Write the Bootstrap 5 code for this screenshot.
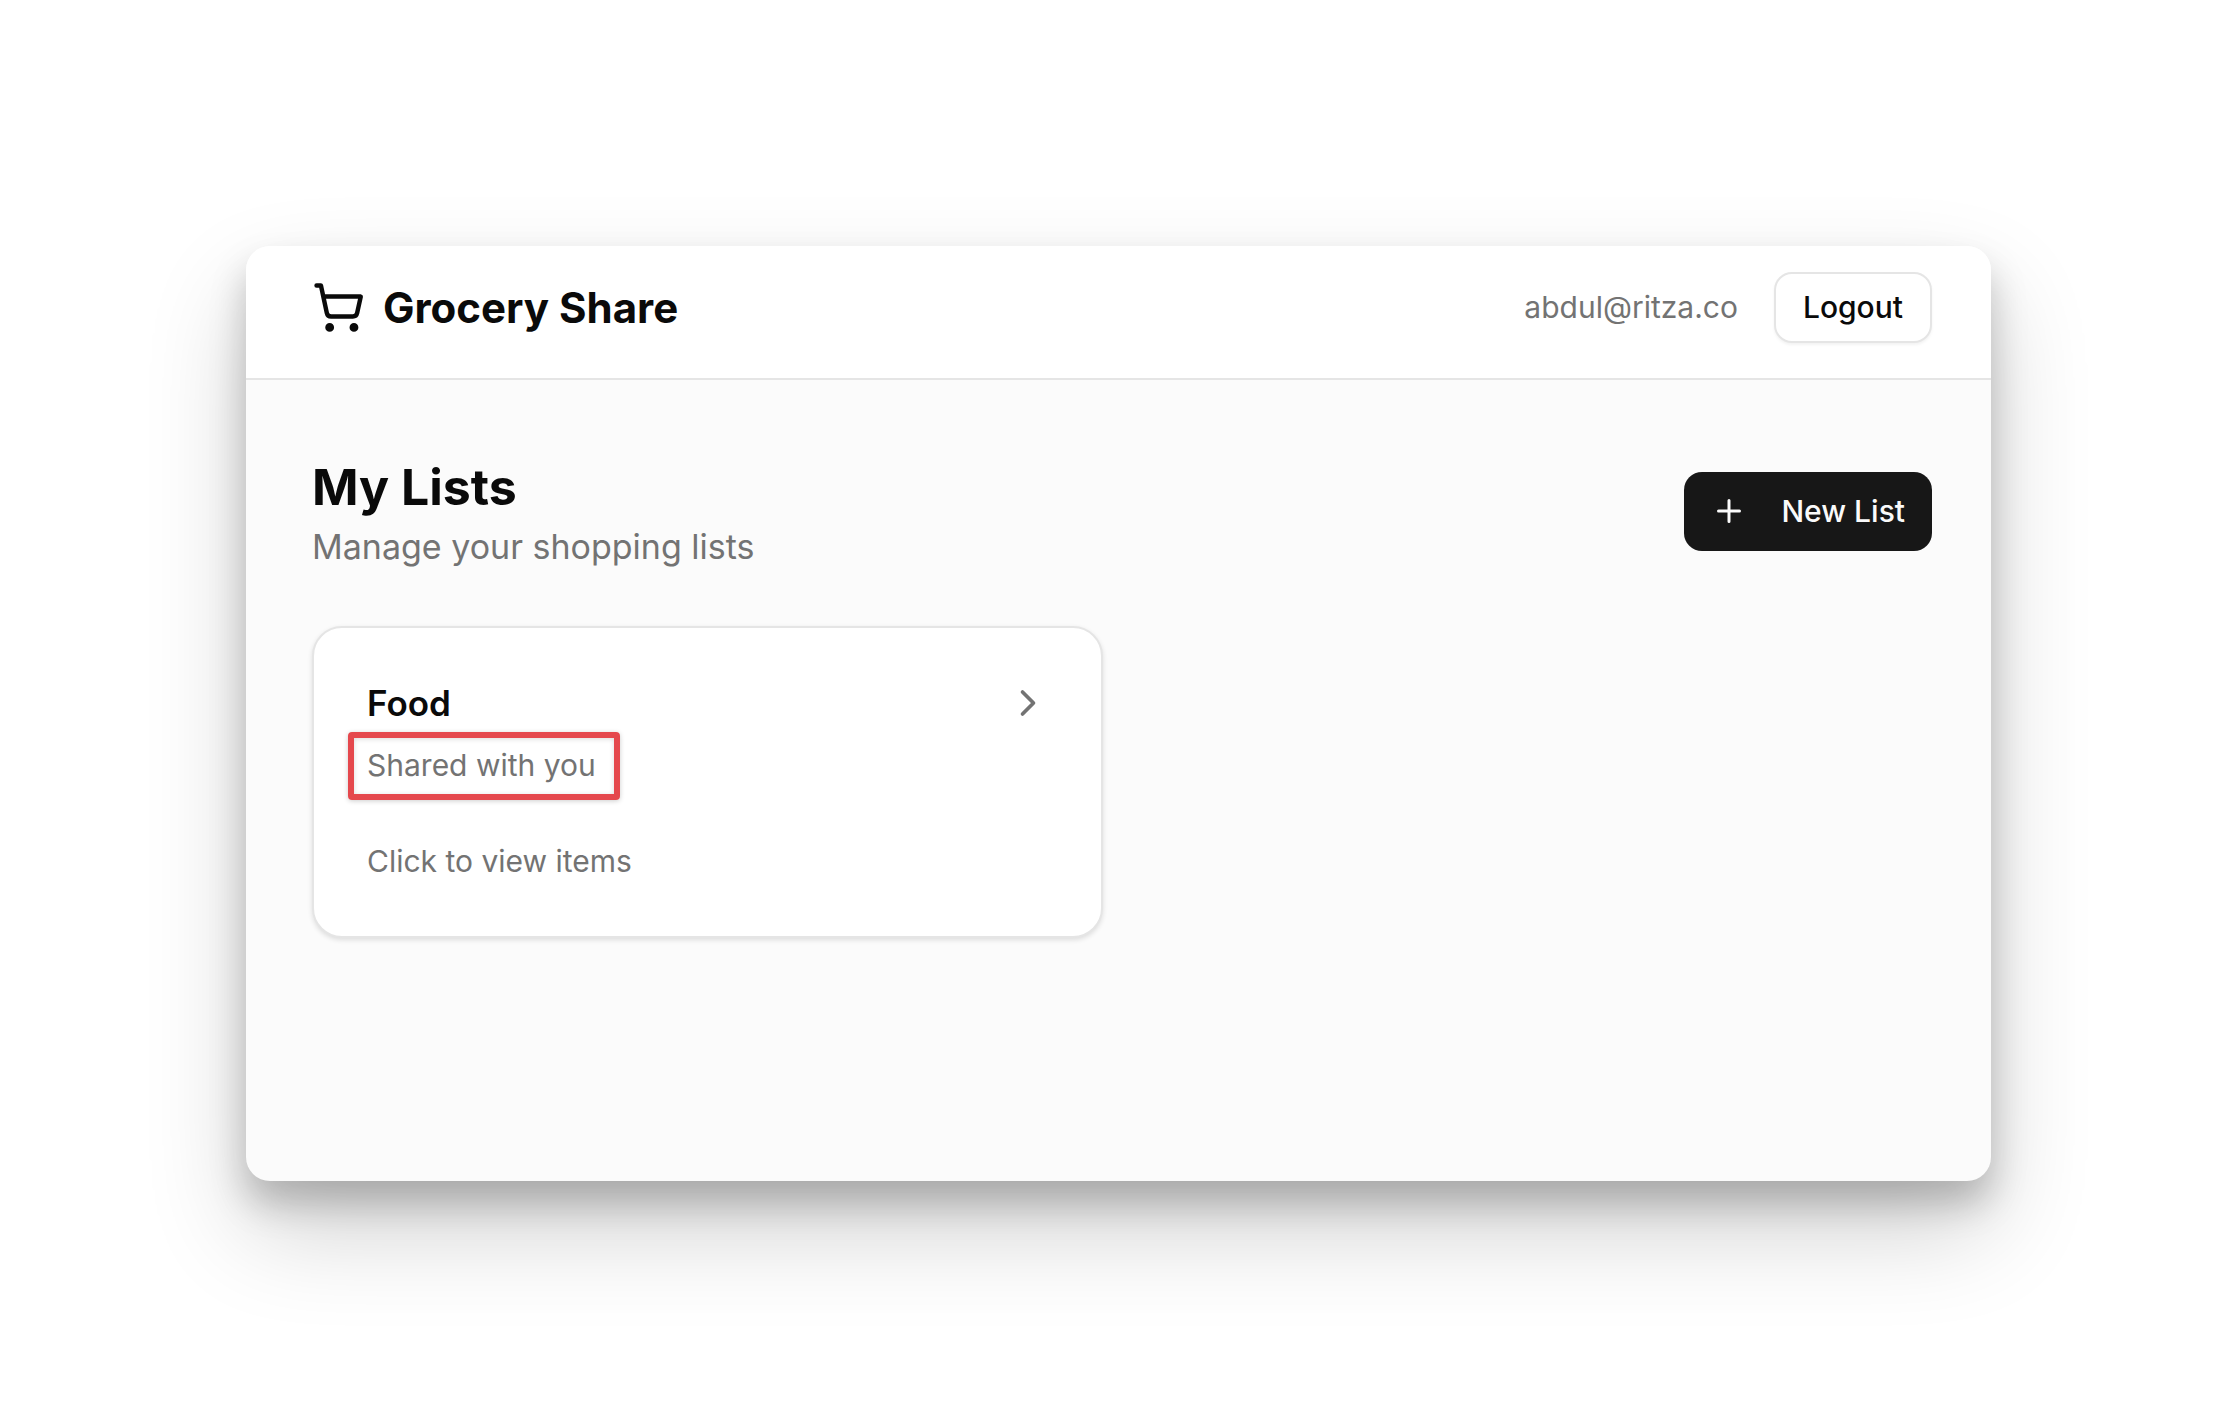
<!DOCTYPE html>
<html lang="en">
<head>
<meta charset="utf-8">
<meta name="viewport" content="width=device-width, initial-scale=1">
<title>Grocery Share</title>
<link href="https://cdn.jsdelivr.net/npm/bootstrap@5.3.0/dist/css/bootstrap.min.css" rel="stylesheet">
<style>
  body { font-family: Inter, "Liberation Sans", sans-serif; color: #0a0a0a; background: #fff; font-size: 30px; }
  .stage { min-height: 100vh; padding: 246px; }
  .app-window { background: #fbfbfb; border-radius: 24px; overflow: hidden;
    box-shadow: 0 48px 100px rgba(0,0,0,.19), 0 22px 36px rgba(0,0,0,.21); }
  .app-header { background: #fff; border-bottom: 2px solid #e5e5e5; padding: 26px 59px 35px 66px; }
  .app-main { padding: 71px 59px 60px 66px; }
  .ink { color: #0a0a0a; }
  .brand { gap: 18px; font-size: 42px; font-weight: 700; line-height: 54px; }
  .soft { color: #737373; }
  .account { gap: 36px; }
  .ui-btn { font-size: 30px; font-weight: 500; border-radius: 18px; line-height: 45px; }
  .btn-logout { padding: 11px 27px; border: 2px solid #e5e5e5; background: #fff; color: #0a0a0a; box-shadow: 0 2px 3px rgba(0,0,0,.05); }
  .btn-new { padding: 17px 27px; border: 0; background: #171717; color: #fafafa; gap: 34px; }
  .page-title { font-size: 50px; font-weight: 700; line-height: 72px; }
  .page-sub { font-size: 34px; line-height: 48px; }
  .lists { --bs-gutter-x: 38px; --bs-gutter-y: 38px; margin-top: 17px; }
  .list-tile { border: 2px solid #e5e5e5; border-radius: 30px; background: #fff; padding: 53px 51px 52px 53px; box-shadow: 0 2px 5px rgba(0,0,0,.12); }
  .tile-title { font-size: 35px; font-weight: 600; line-height: 44px; }
  .tile-text { font-size: 30px; line-height: 46px; }
  .tile-note { margin: 17px 0 50px; }
  .callout-ring { position: absolute; inset: -10px -24px -12px -19px; border: 6px solid #e5484d; border-radius: 4px; box-shadow: 0 1px 5px rgba(0,0,0,.2), inset 0 1px 5px rgba(0,0,0,.15); pointer-events: none; }
  svg { flex: none; fill: none; stroke: currentColor; stroke-width: 2; stroke-linecap: round; stroke-linejoin: round; }
</style>
</head>
<body>
<div class="stage d-flex flex-column">
  <div class="app-window flex-grow-1">
    <header class="app-header d-flex justify-content-between align-items-center">
      <a href="#" class="brand d-flex align-items-center text-decoration-none ink">
        <svg width="53" height="53" viewBox="0 0 24 24" aria-hidden="true"><circle cx="8" cy="21" r="1"/><circle cx="19" cy="21" r="1"/><path d="M2.05 2.05h2l2.66 12.42a2 2 0 0 0 2 1.58h9.78a2 2 0 0 0 1.95-1.57l1.65-7.43H5.12"/></svg>
        <span>Grocery Share</span>
      </a>
      <div class="account d-flex align-items-center">
        <span class="soft">abdul@ritza.co</span>
        <button type="button" class="btn ui-btn btn-logout">Logout</button>
      </div>
    </header>
    <main class="app-main">
      <div class="d-flex justify-content-between align-items-center">
        <div>
          <h1 class="page-title mb-0">My Lists</h1>
          <p class="page-sub soft mb-0">Manage your shopping lists</p>
        </div>
        <button type="button" class="btn ui-btn btn-new d-flex align-items-center">
          <svg width="36" height="36" viewBox="0 0 24 24" aria-hidden="true"><path d="M5 12h14M12 5v14"/></svg>
          <span>New List</span>
        </button>
      </div>
      <div class="row lists">
        <div class="col-6">
          <a href="#" class="list-tile d-block text-decoration-none ink">
            <div class="d-flex justify-content-between align-items-center">
              <h2 class="tile-title mb-0">Food</h2>
              <svg class="soft" width="44" height="44" viewBox="0 0 24 24" aria-hidden="true"><path d="m9 18 6-6-6-6"/></svg>
            </div>
            <p class="tile-text tile-note soft"><span class="d-inline-block position-relative">Shared with you<span class="callout-ring"></span></span></p>
            <p class="tile-text soft mb-0">Click to view items</p>
          </a>
        </div>
      </div>
    </main>
  </div>
</div>
<script src="https://cdn.jsdelivr.net/npm/bootstrap@5.3.0/dist/js/bootstrap.bundle.min.js"></script>
</body>
</html>
